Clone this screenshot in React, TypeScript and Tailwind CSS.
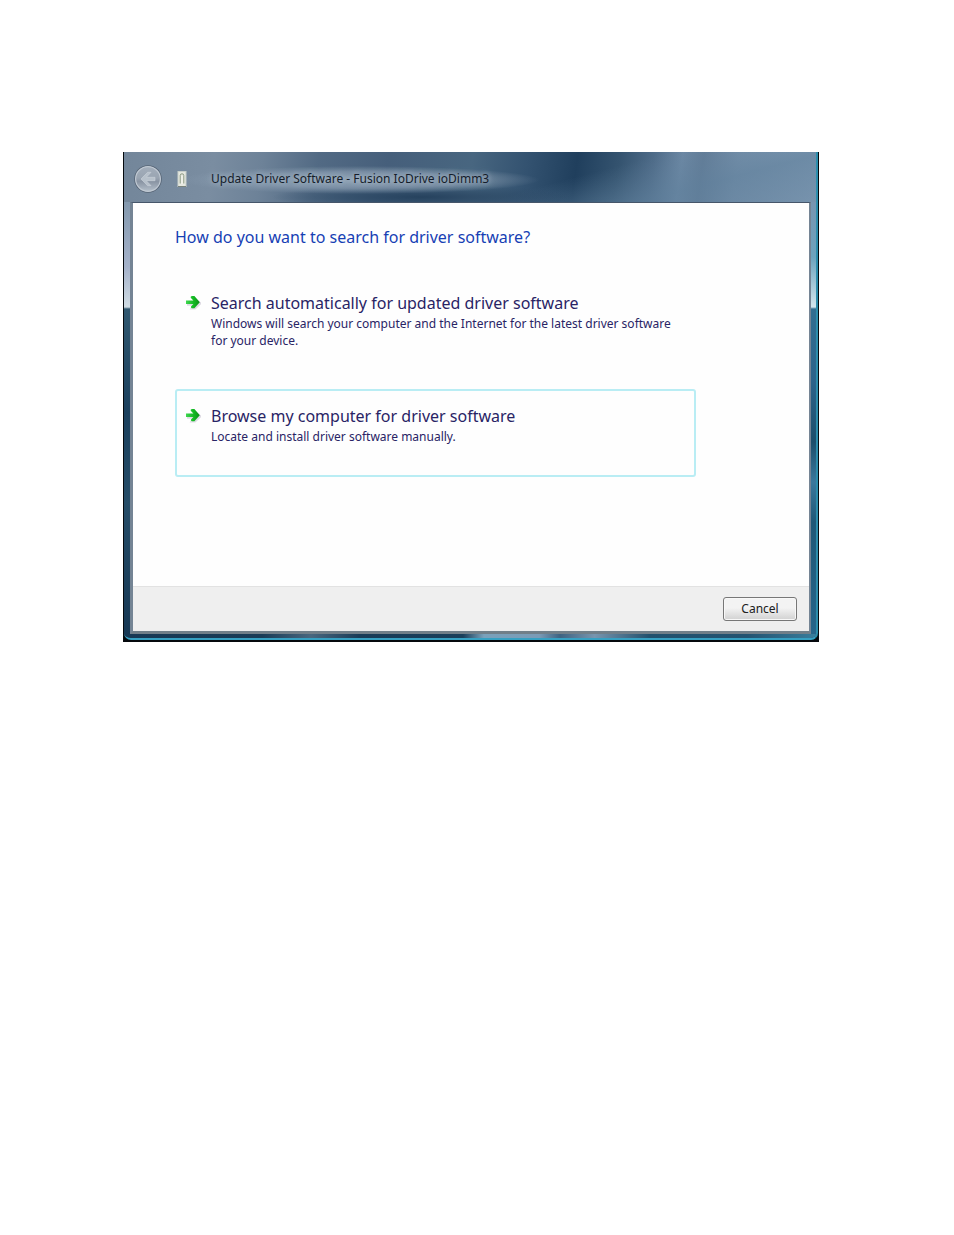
import React from "react";

function GreenArrow() {
  return (
    <svg viewBox="0 0 16 16" className="mt-[2px] h-4 w-4 shrink-0" aria-hidden="true">
      <defs>
        <linearGradient id="leaf" x1="0" x2="1" y1="0" y2="0">
          <stop offset="0" stopColor="#3fd650" />
          <stop offset="0.55" stopColor="#14b923" />
          <stop offset="1" stopColor="#0b8f18" />
        </linearGradient>
      </defs>
      <path d="M2 9.8H9L6.5 13.5H10L15.4 8.4L10 4" fill="none" stroke="#dedbe3" strokeWidth="2" />
      <path
        d="M1 5.6H8.4L5.7 2.8Q5.3 1.2 7 1.1H9.4L14.8 7.2L9.4 13.2H7Q5.3 12.9 6 11.6L8.4 8.9H1Z"
        fill="url(#leaf)"
      />
    </svg>
  );
}

function BackIcon() {
  return (
    <svg viewBox="0 0 28 28" className="h-7 w-7" aria-hidden="true">
      <defs>
        <linearGradient id="orb" x1="0" x2="0" y1="0" y2="1">
          <stop offset="0" stopColor="#a3aebb" />
          <stop offset="0.45" stopColor="#9aa5b2" />
          <stop offset="0.6" stopColor="#8994a3" />
          <stop offset="1" stopColor="#b4bfca" />
        </linearGradient>
      </defs>
      <circle cx="14" cy="14" r="13.8" fill="#566475" />
      <circle cx="14" cy="14" r="12.4" fill="url(#orb)" stroke="#c0c9d3" strokeWidth="1.2" />
      <path
        d="M13.6 7.3L7 14L13.6 20.7H17L12.3 15.7H21V12.3H12.3L17 7.3Z"
        fill="#b7c1cb"
        stroke="#cdd4dc"
        strokeWidth="0.6"
      />
    </svg>
  );
}

function DeviceIcon() {
  return (
    <svg viewBox="0 0 10 16" className="h-4 w-[10px]" aria-hidden="true">
      <rect x="1" y="0.5" width="8" height="15" fill="#e6e8e0" stroke="#c7cfca" />
      <path d="M3.2 12.5V4.4Q3.2 2.8 5 2.8T6.8 4.4V12.5" fill="none" stroke="#8c9a84" strokeWidth="1" />
      <path d="M5 5V13" stroke="#f7f8f2" strokeWidth="1" />
      <path d="M1 15.5H9" stroke="#79837c" />
    </svg>
  );
}

type OptionProps = { title: string; text: string; selected?: boolean };

function Option({ title, text, selected }: OptionProps) {
  return (
    <button
      type="button"
      className={
        "flex h-[88px] w-full items-start gap-2 rounded-[3px] border-2 px-2 pt-[15px] text-left text-[#292465] " +
        (selected ? "border-[#b9edf4]" : "border-transparent")
      }
    >
      <GreenArrow />
      <span className="block pl-[2px]">
        <span className="block text-[16px] leading-5">{title}</span>
        <span className="mt-[2px] block text-[12px] leading-[17px]">{text}</span>
      </span>
    </button>
  );
}

export default function App() {
  return (
    <div className="min-h-screen bg-white pt-[152px] pr-[135px] pl-[123px] font-['Noto_Sans','Open_Sans',sans-serif]">
      <main className="bg-[#05090d] pr-px pb-[2px] pl-px">
        <div className="overflow-hidden rounded-b-[7px] border-r-2 border-b-2 border-r-[#2b8dac] border-b-[#35a0c2] bg-[#2c526c]">
          <header className="flex h-[50px] items-center bg-[radial-gradient(ellipse_180px_14px_at_34%_56%,#93a5b8_0%,#8c9fb3aa_60%,transparent_100%),radial-gradient(ellipse_150px_12px_at_43%_90%,#26425e_0%,#2c4965aa_50%,transparent_100%),linear-gradient(165deg,transparent_0%,transparent_62%,#5f809c99_80%,#6484a066_100%),linear-gradient(98deg,#73869a_0%,#7a8da1_13%,#6d8298_20%,#526a84_28%,#465f7b_38%,#486680_50%,#335270_58%,#203f5d_65%,#34536f_71%,#4f6c89_76%,#6c88a4_80%,#627c97_83%,#7690aa_88%,#849db6_100%)] px-[10px] pt-1">
            <button type="button" aria-label="Back" className="rounded-full">
              <BackIcon />
            </button>
            <span className="ml-[15px]">
              <DeviceIcon />
            </span>
            <h1 className="ml-6 text-[12px] leading-4 text-[#151d2b] [text-shadow:0_0_5px_#a9b7c6,0_0_8px_#9babbd]">
              Update Driver Software - Fusion IoDrive ioDimm3
            </h1>
          </header>
          <div className="flex">
            <div className="w-[6px] shrink-0 bg-[linear-gradient(180deg,#8398ad_0px,#a5b2ca_65px,#d0dce4_105px,#315870_107px,#1b405d_210px,#264d68_300px,#173854_100%)]" />
            <div className="min-w-0 grow border-t border-r-2 border-b-[3px] border-l-[3px] border-t-[#46566a] border-r-[#748494] border-b-[#717f89] border-l-[#748494]">
              <section className="bg-[#fefefe] pr-[113px] pb-[109px] pl-[42px]">
                <h2 className="pt-[22px] text-[16px] leading-6 text-[#173fb4]">
                  How do you want to search for driver software?
                </h2>
                <div className="mt-[27px] flex flex-col gap-[25px]">
                  <Option
                    title="Search automatically for updated driver software"
                    text="Windows will search your computer and the Internet for the latest driver software for your device."
                  />
                  <Option
                    selected
                    title="Browse my computer for driver software"
                    text="Locate and install driver software manually."
                  />
                </div>
              </section>
              <footer className="flex h-[45px] items-center justify-end border-t border-[#e2e2e2] bg-[#efefef] pr-3">
                <button
                  type="button"
                  className="h-6 w-[74px] rounded-[3px] border border-[#777777] bg-linear-to-b from-[#f3f3f3] from-45% to-[#d1d1d1] to-100% text-[12px] leading-4 text-[#202020] shadow-[inset_0_0_0_1px_#f8f8f8]"
                >
                  Cancel
                </button>
              </footer>
            </div>
            <div className="w-[5px] shrink-0 bg-[linear-gradient(180deg,#7895b1_0px,#6da3bd_55px,#d2e5ed_105px,#326e91_107px,#2d638a_180px,#1d4e6b_240px,#3b789c_280px,#205877_320px,#27658a_100%)]" />
          </div>
          <div className="h-1 bg-[linear-gradient(90deg,#173854_0%,#193b56_20%,#49677f_27%,#183b57_34%,#193e5a_49%,#7aa1bb_52%,#7b9bb6_60%,#3e6382_63%,#7895ae_68%,#21506d_76%,#235371_90%,#397d9c_100%)]" />
        </div>
      </main>
    </div>
  );
}
